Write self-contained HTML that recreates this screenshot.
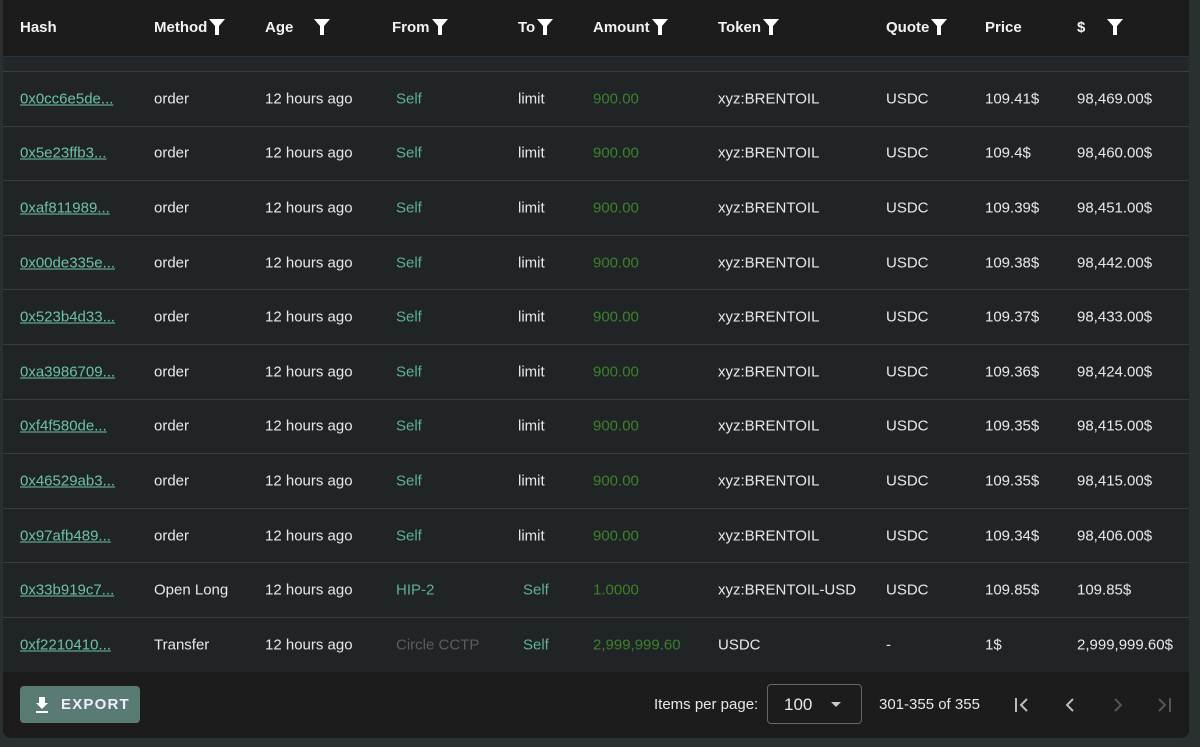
<!DOCTYPE html>
<html><head><meta charset="utf-8"><style>
*{box-sizing:border-box;margin:0;padding:0}
body{width:1200px;height:747px;background:#2a2f30;font-family:"Liberation Sans",sans-serif;overflow:hidden;position:relative;color:#e8e8e8;font-size:15px}
.card{position:absolute;left:3px;top:0;width:1186px;height:738px;background:#1c1c1c;border-radius:0 0 8px 8px;overflow:hidden}
.hdr{position:absolute;left:0;top:0;width:100%;height:56px;background:#1c1c1c}
.gap{position:absolute;left:0;top:56px;width:100%;height:16px;background:#24272a;border-top:1px solid #303335;border-bottom:1px solid #3a3d40}
.row{position:absolute;left:0;width:100%;height:54.6px;background:#212426;border-bottom:1px solid #3a3d40}
.c{position:absolute;top:50%;transform:translateY(-50%);white-space:nowrap}
.h{position:absolute;top:17px;height:20px;font-weight:bold;font-size:15px;color:#f2f2f2;display:flex;align-items:center}
.h svg{margin-left:2px}
a{color:#6cc0a8;text-decoration:underline}
.self{color:#5fae96}
.amt{color:#3b8228}
.foot{position:absolute;left:0;top:672px;width:100%;height:66px;background:#1c1c1c}
.btn{position:absolute;left:17px;top:14px;width:120px;height:37px;background:#5a7a74;border-radius:4px;color:#eef;font-weight:bold;letter-spacing:1.2px;font-size:15px;display:flex;align-items:center;padding-left:15px}
.sel{position:absolute;left:764px;top:12px;width:95px;height:40px;border:1px solid #666;border-radius:4px}
</style></head><body>
<div class="card">
<div class="hdr">
<div class="h" style="left:17px">Hash</div>
<div class="h" style="left:151px">Method<svg width="16" height="18" viewBox="0 0 16 18"><path d="M0 1h16l-6 7v9h-4v-9z" fill="#fff"/></svg></div>
<div class="h" style="left:262px">Age<svg style="margin-left:21px" width="16" height="18" viewBox="0 0 16 18"><path d="M0 1h16l-6 7v9h-4v-9z" fill="#fff"/></svg></div>
<div class="h" style="left:389px">From<svg width="16" height="18" viewBox="0 0 16 18"><path d="M0 1h16l-6 7v9h-4v-9z" fill="#fff"/></svg></div>
<div class="h" style="left:515px">To<svg width="16" height="18" viewBox="0 0 16 18"><path d="M0 1h16l-6 7v9h-4v-9z" fill="#fff"/></svg></div>
<div class="h" style="left:590px">Amount<svg width="16" height="18" viewBox="0 0 16 18"><path d="M0 1h16l-6 7v9h-4v-9z" fill="#fff"/></svg></div>
<div class="h" style="left:715px">Token<svg width="16" height="18" viewBox="0 0 16 18"><path d="M0 1h16l-6 7v9h-4v-9z" fill="#fff"/></svg></div>
<div class="h" style="left:883px">Quote<svg width="16" height="18" viewBox="0 0 16 18"><path d="M0 1h16l-6 7v9h-4v-9z" fill="#fff"/></svg></div>
<div class="h" style="left:982px">Price</div>
<div class="h" style="left:1074px">$<svg style="margin-left:22px" width="16" height="18" viewBox="0 0 16 18"><path d="M0 1h16l-6 7v9h-4v-9z" fill="#fff"/></svg></div>
</div>
<div class="gap"></div>
<div id="rows"></div>
<div class="foot">
<div class="btn"><svg width="14" height="16" viewBox="0 0 14 16" style="margin-right:12px"><path d="M4 0h6v6h3l-6 6-6-6h3z M1 14h12v2h-12z" fill="#fff"/></svg>EXPORT</div>
<div style="position:absolute;left:651px;top:24px;font-size:15px">Items per page:</div>
<div class="sel"><span style="position:absolute;left:16px;top:10px;font-size:17px">100</span><svg style="position:absolute;left:63px;top:17px" width="10" height="6"><path d="M0 0h10l-5 5z" fill="#ccc"/></svg></div>
<div style="position:absolute;left:876px;top:24px;font-size:15px">301-355 of 355</div>
<svg style="position:absolute;left:1010px;top:24px" width="18" height="18" viewBox="0 0 18 18"><path d="M3 2v14" stroke="#bbb" stroke-width="2"/><path d="M14 3l-6 6 6 6" stroke="#bbb" stroke-width="2" fill="none"/></svg>
<svg style="position:absolute;left:1058px;top:24px" width="18" height="18" viewBox="0 0 18 18"><path d="M12 3l-6 6 6 6" stroke="#bbb" stroke-width="2" fill="none"/></svg>
<svg style="position:absolute;left:1106px;top:24px" width="18" height="18" viewBox="0 0 18 18"><path d="M6 3l6 6-6 6" stroke="#555" stroke-width="2" fill="none"/></svg>
<svg style="position:absolute;left:1152px;top:24px" width="18" height="18" viewBox="0 0 18 18"><path d="M4 3l6 6-6 6" stroke="#555" stroke-width="2" fill="none"/><path d="M15 2v14" stroke="#555" stroke-width="2"/></svg>
</div>
</div>
<script>
var d=[
["0x0cc6e5de...","order","Self","limit","900.00","xyz:BRENTOIL","USDC","109.41$","98,469.00$"],
["0x5e23ffb3...","order","Self","limit","900.00","xyz:BRENTOIL","USDC","109.4$","98,460.00$"],
["0xaf811989...","order","Self","limit","900.00","xyz:BRENTOIL","USDC","109.39$","98,451.00$"],
["0x00de335e...","order","Self","limit","900.00","xyz:BRENTOIL","USDC","109.38$","98,442.00$"],
["0x523b4d33...","order","Self","limit","900.00","xyz:BRENTOIL","USDC","109.37$","98,433.00$"],
["0xa3986709...","order","Self","limit","900.00","xyz:BRENTOIL","USDC","109.36$","98,424.00$"],
["0xf4f580de...","order","Self","limit","900.00","xyz:BRENTOIL","USDC","109.35$","98,415.00$"],
["0x46529ab3...","order","Self","limit","900.00","xyz:BRENTOIL","USDC","109.35$","98,415.00$"],
["0x97afb489...","order","Self","limit","900.00","xyz:BRENTOIL","USDC","109.34$","98,406.00$"],
["0x33b919c7...","Open Long","HIP-2","Self","1.0000","xyz:BRENTOIL-USD","USDC","109.85$","109.85$"],
["0xf2210410...","Transfer","Circle CCTP","Self","2,999,999.60","USDC","-","1$","2,999,999.60$"]];
var h="";
d.forEach(function(r,i){
var top=72+i*54.6;
var fromC=r[2]=="Circle CCTP"?"color:#5a5e60":"";
var fromCls=r[2]=="Circle CCTP"?"":"self";
var toCls=r[3]=="Self"?"self":"";
var toL=r[3]=="Self"?520:515;
h+='<div class="row" style="top:'+top+'px">'+
'<div class="c" style="left:17px"><a>'+r[0]+'</a></div>'+
'<div class="c" style="left:151px">'+r[1]+'</div>'+
'<div class="c" style="left:262px">12 hours ago</div>'+
'<div class="c '+fromCls+'" style="left:393px;'+fromC+'">'+r[2]+'</div>'+
'<div class="c '+toCls+'" style="left:'+toL+'px">'+r[3]+'</div>'+
'<div class="c amt" style="left:590px">'+r[4]+'</div>'+
'<div class="c" style="left:715px">'+r[5]+'</div>'+
'<div class="c" style="left:883px">'+r[6]+'</div>'+
'<div class="c" style="left:982px">'+r[7]+'</div>'+
'<div class="c" style="left:1074px">'+r[8]+'</div></div>';
});
document.getElementById("rows").innerHTML=h;
</script>
</body></html>
